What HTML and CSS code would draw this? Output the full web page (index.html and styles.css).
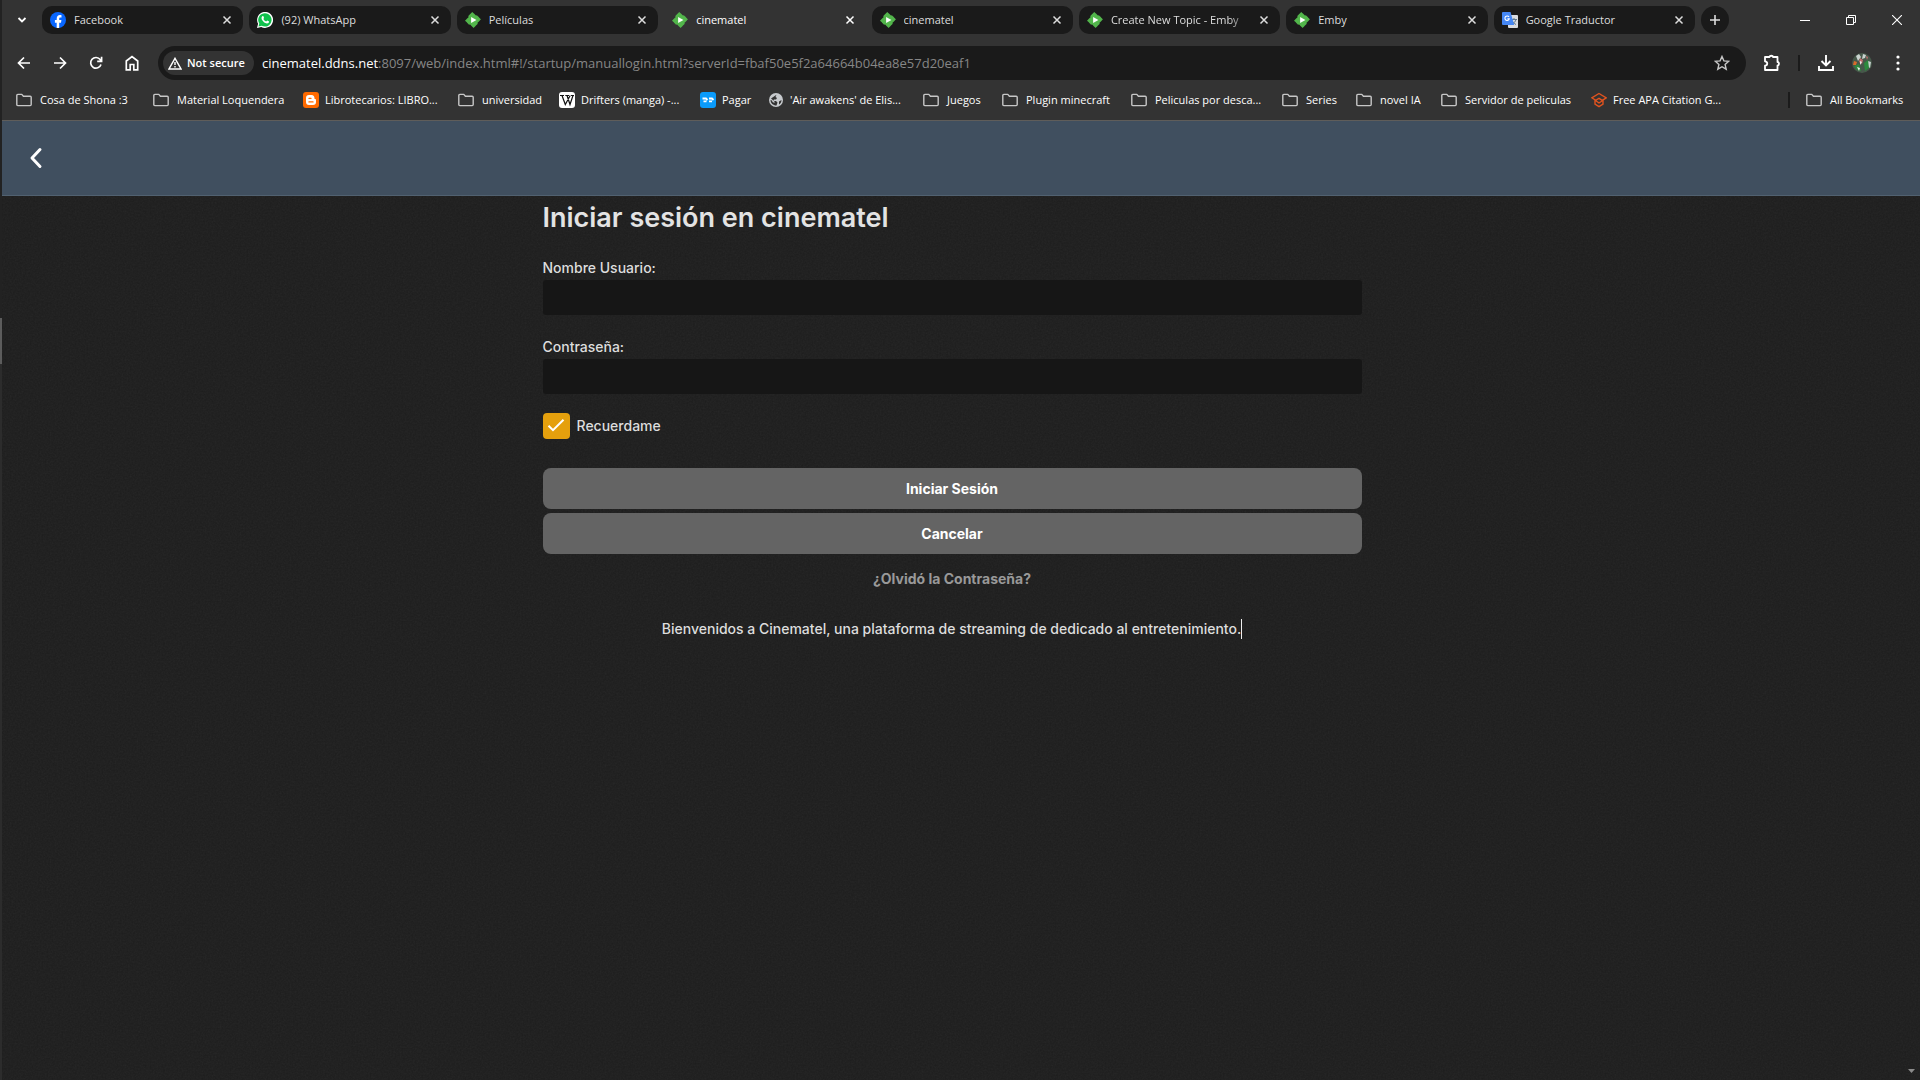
FILE: index.html
```html
<!DOCTYPE html>
<html lang="es">
<head>
<meta charset="utf-8">
<title>cinematel</title>
<link rel="stylesheet" href="styles.css">
</head>
<body>
<svg class="defs" width="0" height="0" aria-hidden="true">
  <symbol id="emby" viewBox="0 0 24 24"><path fill="#52b54b" d="M11.041 0c-.007 0-1.456 1.43-3.219 3.176L4.615 6.352l.512.513.512.512-2.819 2.791L0 12.961l1.83 1.848c1.006 1.016 2.438 2.46 3.182 3.209l1.351 1.359.508-.496c.28-.273.515-.498.524-.498.008 0 1.266 1.264 2.794 2.808L12.97 24l.187-.182c.23-.225 5.007-4.95 5.717-5.656l.52-.516-.502-.513c-.276-.282-.5-.52-.496-.53.003-.009 1.264-1.26 2.802-2.783 1.538-1.522 2.8-2.776 2.803-2.785.005-.012-3.617-3.684-6.107-6.193L17.65 4.6l-.505.505c-.279.278-.517.501-.53.497-.013-.005-1.27-1.267-2.793-2.805A449.655 449.655 0 0 0 11.041 0z"/><path fill="#fff" d="M9.2 7.367 17.18 12 9.2 16.62z"/></symbol>
  <symbol id="folder" viewBox="0 0 16 16"><path fill="none" stroke="#c7c7c7" stroke-width="1.4" stroke-linejoin="round" d="M.8 3.4q0-1 1-1h4l1.6 1.8h6.800q1 0 1 1v7.400q0 1-1 1H1.800q-1 0-1-1z"/></symbol>
  <symbol id="x" viewBox="0 0 10 10"><path fill="none" stroke="currentColor" stroke-width="1.5" d="M1.500 1.500l7 7M8.500 1.500l-7 7"/></symbol>
</svg>
<div class="window">
  <header class="chrome">
    <div class="tabstrip">
      <button class="icon-btn search-tabs" aria-label="Buscar pestañas"><svg width="10" height="10" viewBox="0 0 10 10"><path d="M1.500 3l3.500 3.500L8.500 3" fill="none" stroke="#fff" stroke-width="1.800"/></svg></button>
      <nav class="tabs">
        <div class="tab"><svg class="fav" viewBox="0 0 16 16"><circle cx="8" cy="8" r="8" fill="#0866ff"/><path fill="#fff" d="M6.700 16v-5.300H4.900V8.100h1.800V7c0-2.700 1.200-3.900 3.300-3.900.5 0 1.100.1 1.500.2v2.200h-.9c-1.100 0-1.400.5-1.400 1.400v1.200h2.200l-.4 2.600H9.200V16z"/></svg><span class="tab-title">Facebook</span><button class="close" aria-label="Cerrar"><svg width="10" height="10"><use href="#x"/></svg></button></div>
        <div class="tab"><svg class="fav" viewBox="0 0 16 16"><path fill="#fff" d="M0 16l1.100-4.200A8 8 0 1 1 4.200 14.900z"/><path fill="#10c14c" d="M1.500 14.500l.8-2.900a6.700 6.700 0 1 1 2.400 2.200z"/><path fill="#fff" d="M5.300 4.200c.3-.3.9-.3 1.100.1l.6 1.400c.1.500-.6.900-.6 1.200.5 1.100 1.500 2 2.700 2.500.4.100.8-.9 1.200-.8l1.500.7c.4.300.1 1.300-.3 1.600-1.300 1-3.200.3-4.500-.7C5.800 9.200 4.500 7.700 4.500 6c0-.700.3-1.400.8-1.800z"/></svg><span class="tab-title">(92) WhatsApp</span><button class="close" aria-label="Cerrar"><svg width="10" height="10"><use href="#x"/></svg></button></div>
        <div class="tab"><svg class="fav"><use href="#emby"/></svg><span class="tab-title">Películas</span><button class="close" aria-label="Cerrar"><svg width="10" height="10"><use href="#x"/></svg></button></div>
        <div class="tab active"><svg class="fav"><use href="#emby"/></svg><span class="tab-title">cinematel</span><button class="close" aria-label="Cerrar"><svg width="10" height="10"><use href="#x"/></svg></button></div>
        <div class="tab"><svg class="fav"><use href="#emby"/></svg><span class="tab-title">cinematel</span><button class="close" aria-label="Cerrar"><svg width="10" height="10"><use href="#x"/></svg></button></div>
        <div class="tab"><svg class="fav"><use href="#emby"/></svg><span class="tab-title fade">Create New Topic - Emby</span><button class="close" aria-label="Cerrar"><svg width="10" height="10"><use href="#x"/></svg></button></div>
        <div class="tab"><svg class="fav"><use href="#emby"/></svg><span class="tab-title">Emby</span><button class="close" aria-label="Cerrar"><svg width="10" height="10"><use href="#x"/></svg></button></div>
        <div class="tab"><svg class="fav" viewBox="0 0 16 16"><rect x="6" y="3" width="10" height="13" rx="1" fill="#dadce0"/><path d="M9 7.500h6M12 6v1.500M14 7.500c-.5 2-2 3.700-4 4.800M10 8.500c.8 1.800 2.200 3 4 4" stroke="#60788b" fill="none"/><path fill="#4587f4" d="M1 0h7.500l3.700 13H1q-1 0-1-1V1q0-1 1-1z"/><path d="M7 5A2.200 2.200 0 1 0 7.300 6.700H5.400" fill="none" stroke="#fff" stroke-width="1.100"/></svg><span class="tab-title">Google Traductor</span><button class="close" aria-label="Cerrar"><svg width="10" height="10"><use href="#x"/></svg></button></div>
      </nav>
      <button class="new-tab" aria-label="Nueva pestaña"><svg width="12" height="12" viewBox="0 0 12 12"><path d="M6 1v10M1 6h10" stroke="#ddd" stroke-width="1.600"/></svg></button>
      <div class="win-controls">
        <button class="icon-btn" aria-label="Minimizar"><svg width="10" height="10"><path d="M0 5.500h10" stroke="#fff"/></svg></button>
        <button class="icon-btn" aria-label="Restaurar"><svg width="10" height="10" fill="none" stroke="#fff"><path d="M.5 2.500h7v7h-7zM2.500 2.500v-2h7v7h-2"/></svg></button>
        <button class="icon-btn" aria-label="Cerrar ventana"><svg width="10" height="10"><path d="M0 0l10 10M10 0L0 10" stroke="#fff" stroke-width="1.100"/></svg></button>
      </div>
    </div>
    <div class="toolbar">
      <div class="nav-icons">
        <button class="icon-btn" aria-label="Atrás"><svg width="14" height="14" viewBox="0 0 14 14"><path d="M13 7H2M7 1.500L1.500 7 7 12.500" fill="none" stroke="#fff" stroke-width="1.700"/></svg></button>
        <button class="icon-btn" aria-label="Adelante"><svg width="14" height="14" viewBox="0 0 14 14"><path d="M1 7h11M7 1.500L12.500 7 7 12.500" fill="none" stroke="#fff" stroke-width="1.700"/></svg></button>
        <button class="icon-btn" aria-label="Recargar"><svg width="14" height="14" viewBox="0 0 14 14"><path d="M12 8.500A5.300 5.300 0 1 1 11.200 3.600L12 4.500M12.600.8v4.500H8.200" fill="none" stroke="#fff" stroke-width="1.700"/></svg></button>
        <button class="icon-btn" aria-label="Inicio"><svg width="14" height="16" viewBox="0 0 14 16"><path d="M1.300 6L7 1.500 12.700 6v8.800H8.800V9.500H5.200v5.300H1.300z" fill="none" stroke="#fff" stroke-width="1.700"/></svg></button>
      </div>
      <div class="omnibox">
        <button class="chip"><svg width="14" height="13" viewBox="0 0 14 13"><path d="M7 1.300L13 12H1z" fill="none" stroke="#fff" stroke-width="1.400"/><path d="M7 5v3M7 9v1.500" stroke="#fff" stroke-width="1.400"/></svg>Not secure</button>
        <a class="url" href="#"><span class="host">cinematel.ddns.net</span>:8097/web/index.html#!/startup/manuallogin.html?serverId=fbaf50e5f2a64664b04ea8e57d20eaf1</a>
        <button class="icon-btn" aria-label="Marcador"><svg width="16" height="16" viewBox="0 0 16 16"><path d="M8 1.500l1.900 4.400 4.800.4-3.600 3.200 1.100 4.700L8 11.700l-4.200 2.500 1.100-4.700L1.300 6.300l4.800-.4z" fill="none" stroke="#c7c7c7" stroke-width="1.400"/></svg></button>
      </div>
      <div class="tools">
        <button class="icon-btn" aria-label="Extensiones"><svg width="18" height="18" viewBox="0 0 18 18"><path d="M2 3h4.500c0-1.700 3.500-1.700 3.500 0h4.500v5c2 0 2 3.500 0 3.500V16H2v-4.300c3-.3 3-4.100 0-4.400z" fill="none" stroke="#fff" stroke-width="1.800" stroke-linejoin="round"/></svg></button>
        <span class="divider"></span>
        <button class="icon-btn" aria-label="Descargas"><svg width="16" height="16" viewBox="0 0 16 16"><path d="M8 0v10M3.500 6L8 10.500 12.500 6M1 11v4h14v-4" fill="none" stroke="#fff" stroke-width="1.900"/></svg></button>
        <button class="icon-btn" aria-label="Perfil"><svg width="20" height="20" viewBox="0 0 20 20"><circle cx="10" cy="10" r="10" fill="#46584a"/><path fill="#c9d2cf" d="M4 3l3-2 2 3-3 4zM11 1l3 1-1 3-3 1zM16 8l3 1-1 6-3-2z"/><path fill="#2c8a3d" d="M2 13l5-2 2 7-4-1zM12 10l4-3 1 8-4 3z"/><path fill="#c27070" d="M8 5l3 2-1 4-3-2zM14 3l2 1-1 3z"/><path fill="#d96a2b" d="M2 8l3 1-1 3H1z"/><path fill="#eee" d="M5 14l3 1-1 3zM8 8l2 1-2 3z"/></svg></button>
        <button class="icon-btn" aria-label="Menú"><svg width="4" height="16" viewBox="0 0 4 16" fill="#fff"><circle cx="2" cy="2" r="1.600"/><circle cx="2" cy="8" r="1.600"/><circle cx="2" cy="14" r="1.600"/></svg></button>
      </div>
    </div>
    <nav class="bookmarks">
      <div class="bookmark-list">
        <a href="#" class="bm dir"><svg class="fav"><use href="#folder"/></svg>Cosa de Shona :3</a>
        <a href="#" class="bm dir"><svg class="fav"><use href="#folder"/></svg>Material Loquendera</a>
        <a href="#" class="bm"><svg class="fav" viewBox="0 0 16 16"><rect width="16" height="16" rx="3" fill="#ff6a00"/><path fill="#fff" fill-rule="evenodd" d="M6 3h2.500C10.500 3 11.500 4.500 11.500 6.500q0 .5.700.5.800 0 .8 1v2q0 3-3 3H6q-3 0-3-3V6q0-3 3-3zm0 2.700q-.7 0-.7.600t.7.600h2q.7 0 .7-.6t-.7-.6zm0 3.500q-.7 0-.7.700t.7.700h4q.7 0 .7-.7t-.7-.7z"/></svg>Librotecarios: LIBRO...</a>
        <a href="#" class="bm dir"><svg class="fav"><use href="#folder"/></svg>universidad</a>
        <a href="#" class="bm"><svg class="fav" viewBox="0 0 16 16"><rect width="16" height="16" rx="3" fill="#fff"/><path d="M1 3.500h4M6.300 3.500H10M12 3.500h3M3 3.500l3.300 9 4.900-9M8 3.500l3 9L14 3.500" fill="none" stroke="#111" stroke-width="1.200"/></svg>Drifters (manga) -...</a>
        <a href="#" class="bm"><svg class="fav" viewBox="0 0 16 16"><rect width="16" height="16" rx="3" fill="#0a9bfb"/><path d="M2.500 6.500h3.500l1.500 1.500M3.500 9.300h3M9 6.500h3l1.500 1.500M9 9.300h3" fill="none" stroke="#fff" stroke-width="1.800"/></svg>Pagar</a>
        <a href="#" class="bm"><svg class="fav" viewBox="0 0 16 16"><circle cx="8" cy="8" r="7" fill="#c7cacd"/><path fill="#333" d="M8.500 2.800L7.500 5l1.500 1-1 1.500H6L5 9h3l1.500 1.500-1 3C5 13.500 2.500 11 2.500 8L4 8.500 4.500 10 6.500 11v-1.500L3 6.500zM11 9.500l2.500-1.500c0 2-1 3.500-2.500 4.500z"/></svg>'Air awakens' de Elis...</a>
        <a href="#" class="bm dir"><svg class="fav"><use href="#folder"/></svg>Juegos</a>
        <a href="#" class="bm dir"><svg class="fav"><use href="#folder"/></svg>Plugin minecraft</a>
        <a href="#" class="bm dir"><svg class="fav"><use href="#folder"/></svg>Peliculas por desca...</a>
        <a href="#" class="bm dir"><svg class="fav"><use href="#folder"/></svg>Series</a>
        <a href="#" class="bm dir"><svg class="fav"><use href="#folder"/></svg>novel IA</a>
        <a href="#" class="bm dir"><svg class="fav"><use href="#folder"/></svg>Servidor de peliculas</a>
        <a href="#" class="bm"><svg class="fav" viewBox="0 0 16 16"><path d="M8 1.500l7.300 4.300-4 2.600L8 6.300 4.700 8.300.8 5.800zM4 8v4l4 2.600 4-2.600V9L8 6.500M4.500 8.500L8 11l3-2" fill="none" stroke="#e0531f" stroke-width="1.400"/></svg>Free APA Citation G...</a>
      </div>
      <span class="divider"></span>
      <a href="#" class="bm dir all"><svg class="fav"><use href="#folder"/></svg>All Bookmarks</a>
    </nav>
  </header>
  <div class="page">
    <svg class="grain" aria-hidden="true"><filter id="noise" x="0" y="0" width="100%" height="100%"><feTurbulence type="fractalNoise" baseFrequency="0.6" numOctaves="2" stitchTiles="stitch"/><feColorMatrix type="saturate" values="0"/></filter><rect width="100%" height="100%" filter="url(#noise)"/></svg>
    <div class="app-bar"><button class="icon-btn" aria-label="Volver"><svg width="24" height="24" viewBox="0 0 24 24"><path d="M16 3.500L8 12l8 8.500" fill="none" stroke="#fff" stroke-width="3" stroke-linecap="round" stroke-linejoin="round"/></svg></button></div>
    <main class="content">
      <form class="login">
        <h1>Iniciar sesión en cinematel</h1>
        <div class="field"><label for="user">Nombre Usuario:</label><input id="user" type="text"></div>
        <div class="field"><label for="pass">Contraseña:</label><input id="pass" type="password"></div>
        <label class="remember"><span class="box"><input type="checkbox" checked><svg width="20" height="20" viewBox="0 0 20 20"><path d="M2.500 9.700L7 14.200 17.500 3.700" fill="none" stroke="#fff" stroke-width="2"/></svg></span>Recuerdame</label>
        <div class="actions">
          <button type="button" class="btn">Iniciar Sesión</button>
          <button type="button" class="btn">Cancelar</button>
        </div>
        <a class="forgot" href="#">¿Olvidó la Contraseña?</a>
        <p class="welcome">Bienvenidos a Cinematel, una plataforma de streaming de dedicado al entretenimiento.</p>
      </form>
    </main>
    <svg class="scroll-arrow" width="7" height="4" viewBox="0 0 7 4" aria-hidden="true"><path d="M0 0h7L3.500 4z" fill="#8b8b8b"/></svg>
  </div>
  <div class="edge"></div>
</div>
</body>
</html>
```
FILE: styles.css
```css
* { box-sizing: border-box; }

body {
  margin: 0;
  background: #1d1d1d;
  color: #ddd;
  font-family: Inter, "Liberation Sans", sans-serif;
}

button { border: 0; padding: 0; background: none; color: inherit; font: inherit; }
a { color: inherit; text-decoration: none; }
svg { display: block; flex: none; }
.defs { position: absolute; }

.window {
  position: relative;
  display: flex;
  flex-direction: column;
  min-height: 100vh;
  padding-left: 2px;
}

/* strip of the window behind, seen at the left edge */
.edge {
  position: absolute;
  left: 0;
  top: 0;
  width: 2px;
  height: 100%;
  background: linear-gradient(#222 0 318px, #5c5c5c 318px 364px, #2c2c2c 364px);
}

/* Browser frame */
.chrome {
  background: #333;
  border-bottom: 1px solid #5f5d5a;
  color: #fff;
  font-family: "Open Sans", "Noto Sans", sans-serif;
  font-size: 11px;
  line-height: 16px;
}

.icon-btn { display: grid; place-items: center; }
.fav { width: 16px; height: 16px; }
.divider { width: 2px; height: 16px; background: #1b1b1b; }

.tabstrip { display: flex; align-items: center; padding-top: 6px; height: 34px; }
.search-tabs { width: 40px; height: 28px; }
.tabs { display: flex; flex: 1; gap: 6px; min-width: 0; }

.tab {
  display: flex;
  flex: 1;
  align-items: center;
  gap: 8px;
  min-width: 0;
  height: 28px;
  padding: 0 10px 0 8px;
  border-radius: 10px;
  background: #1a1a1a;
  color: #ddd;
}
.tab.active { background: none; color: #fff; }
.tab-title { flex: 1; overflow: hidden; white-space: nowrap; }
.fade { -webkit-mask-image: linear-gradient(90deg, #000 85%, transparent); mask-image: linear-gradient(90deg, #000 85%, transparent); }
.close { display: grid; place-items: center; width: 12px; height: 16px; }

.new-tab { display: grid; place-items: center; width: 28px; height: 28px; margin-left: 6px; border-radius: 50%; background: #1a1a1a; }
.win-controls { display: flex; margin-left: 53px; }
.win-controls .icon-btn { width: 46px; height: 28px; }

.toolbar { display: flex; align-items: center; margin-top: 12px; height: 34px; }
.nav-icons { display: flex; width: 156px; padding-left: 4px; }
.nav-icons .icon-btn { width: 36px; height: 34px; }
.omnibox {
  display: flex;
  flex: 1;
  align-items: center;
  min-width: 0;
  height: 34px;
  padding: 0 16px 0 5px;
  border-radius: 17px;
  background: #1a1a1a;
}
.chip {
  display: flex;
  align-items: center;
  gap: 5px;
  width: 91px;
  height: 24px;
  padding-left: 5px;
  border-radius: 12px;
  background: #333;
  font-size: 11px;
  font-weight: 600;
  white-space: nowrap;
}
.url { flex: 1; margin-left: 8px; overflow: hidden; color: #868686; font-size: 13px; line-height: 20px; white-space: nowrap; }
.host { color: #fff; }
.tools { display: flex; align-items: center; padding-right: 4px; }
.tools .icon-btn { width: 36px; height: 34px; }
.tools .divider { margin: 0 8px; }
.tools .icon-btn:first-child { margin-left: 8px; }

.bookmarks { display: flex; align-items: center; height: 40px; padding: 0 15px 0 14px; }
.bookmark-list {
  display: grid;
  flex: 1;
  grid-template-columns: 137px 150px 155px 101px 141px 68px 155px 79px 129px 151px 74px 85px 150px 1fr;
}
.bm { display: flex; align-items: center; gap: 6px; white-space: nowrap; }
.bm.dir { gap: 8px; }
.bm.all { min-width: 99px; margin-left: 16px; }

/* Web page */
.page { position: relative; display: flex; flex: 1; flex-direction: column; isolation: isolate; }
.grain { position: absolute; inset: 0; z-index: -1; width: 100%; height: 100%; opacity: 0.06; }
.app-bar {
  display: flex;
  align-items: center;
  height: 75px;
  padding-left: 22px;
  background: #404f5f;
  border-bottom: 1px solid #516170;
}
.content { padding: 0 34px 0 16px; }
.login { display: flex; flex-direction: column; max-width: 819px; margin: 0 auto; font-size: 14px; font-weight: 500; line-height: 20px; }
h1 { margin: 4px 0 22px; color: #e3e3e3; font-size: 27px; font-weight: 600; line-height: 36px; }
.field { display: flex; flex-direction: column; gap: 2px; margin-bottom: 22px; }
.field input {
  width: 100%;
  height: 35px;
  padding: 0 8px;
  border: 0;
  border-radius: 3px;
  outline: 0;
  background: #161616;
  color: #ddd;
  font: inherit;
}
.remember { display: flex; align-items: center; align-self: flex-start; gap: 7px; margin: -3px 0 29px; }
.box { position: relative; display: grid; place-items: center; width: 27px; height: 26px; }
.box input { position: absolute; inset: 0; width: 100%; height: 100%; margin: 0; appearance: none; border-radius: 4px; background: #e5a00d; }
.box svg { position: relative; pointer-events: none; }
.actions { display: flex; flex-direction: column; gap: 4px; }
.btn { height: 41px; border-radius: 8px; background: #646464; color: #fff; font-weight: 700; }
.forgot { align-self: center; margin-top: 15px; color: #999; font-weight: 700; }
.welcome { align-self: center; margin: 30px 0 0; border-right: 1px solid #eee; text-align: center; }
.scroll-arrow { position: absolute; right: 5px; bottom: 7px; }
```
